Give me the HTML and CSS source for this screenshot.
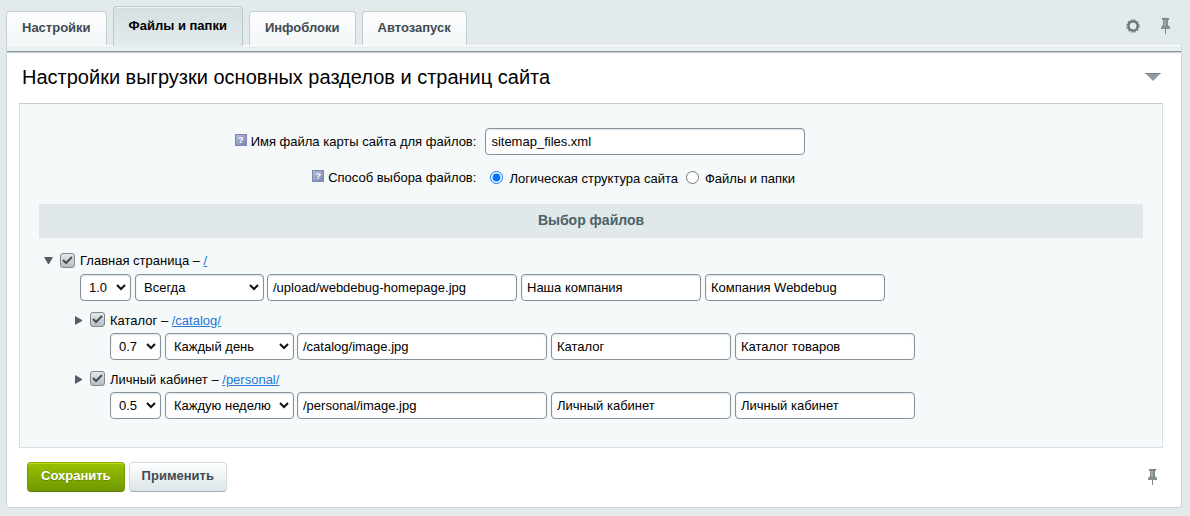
FILE: index.html
```html
<!DOCTYPE html>
<html lang="ru">
<head>
<meta charset="utf-8">
<title>Настройки выгрузки</title>
<link rel="stylesheet" href="styles.css">
</head>
<body>
<svg class="defs" aria-hidden="true">
  <symbol id="pin" viewBox="0 0 12 18"><path d="M3 1h7v2H9v5l2 2v2H2v-2l2-2V3H3z" fill="#858e91"/><path d="M3 1h7v1H3z" fill="#737d80"/><path d="M5 3h2v6H5z" fill="#9da5a8"/><path d="M6 12h1v5H6z" fill="#7d8588"/></symbol>
</svg>
<form class="page">
  <header class="bar">
    <nav class="tabs">
      <button type="button" class="tab">Настройки</button>
      <button type="button" class="tab tab-active">Файлы и папки</button>
      <button type="button" class="tab">Инфоблоки</button>
      <button type="button" class="tab">Автозапуск</button>
    </nav>
    <div class="tools">
      <button type="button" class="icon-button" aria-label="Параметры"><svg class="gear" viewBox="0 0 14 14"><circle cx="7" cy="7" r="4.6" fill="none" stroke="#697275" stroke-width="2.2"/><circle cx="7" cy="7" r="6" fill="none" stroke="#7c8588" stroke-width="1.5" stroke-dasharray="1.9 1.24"/></svg></button>
      <button type="button" class="icon-button" aria-label="Закрепить"><svg class="pin"><use href="#pin"/></svg></button>
    </div>
  </header>
  <main class="panel">
    <div class="title-row">
      <h1 class="title">Настройки выгрузки основных разделов и страниц сайта</h1>
      <button type="button" class="icon-button" aria-label="Свернуть"><svg class="collapse" viewBox="0 0 16 8"><path d="M0 0h16L8 8z" fill="#929b9f"/><path d="M0 0h16l-1 1H1z" fill="#767f83"/></svg></button>
    </div>
    <section class="content">
      <div class="field">
        <div class="field-label"><span class="hint">?</span><label for="file-name">Имя файла карты сайта для файлов:</label></div>
        <input class="control name-input" id="file-name" type="text" value="sitemap_files.xml">
      </div>
      <div class="field">
        <div class="field-label"><span class="hint">?</span><span id="mode-label">Способ выбора файлов:</span></div>
        <div class="radios" role="radiogroup" aria-labelledby="mode-label">
          <input class="radio" type="radio" name="mode" id="mode-logic" checked><label class="radio-label" for="mode-logic">Логическая структура сайта</label>
          <input class="radio" type="radio" name="mode" id="mode-files"><label class="radio-label" for="mode-files">Файлы и папки</label>
        </div>
      </div>
      <h2 class="section">Выбор файлов</h2>
      <ul class="tree">
        <li>
          <div class="node"><button type="button" class="icon-button" aria-label="Свернуть ветвь"><svg class="arrow" viewBox="0 0 10 10"><path d="M0 1h9L5 8H4z" fill="#535c69"/></svg></button><input class="check" type="checkbox" id="n1" checked><span><label for="n1">Главная страница</label> – <a class="link" href="#home">/</a></span></div>
          <div class="controls">
            <select class="control priority" aria-label="Приоритет"><option>1.0</option></select>
            <select class="control frequency" aria-label="Частота"><option>Всегда</option></select>
            <input class="control image" type="text" aria-label="Изображение" value="/upload/webdebug-homepage.jpg">
            <input class="control text" type="text" aria-label="Название" value="Наша компания">
            <input class="control text" type="text" aria-label="Описание" value="Компания Webdebug">
          </div>
          <ul class="tree branch">
            <li>
              <div class="node"><button type="button" class="icon-button" aria-label="Развернуть ветвь"><svg class="arrow" viewBox="0 0 10 10"><path d="M1 0l7 4v1L1 9z" fill="#535c69"/></svg></button><input class="check" type="checkbox" id="n2" checked><span><label for="n2">Каталог</label> – <a class="link" href="#catalog">/catalog/</a></span></div>
              <div class="controls">
                <select class="control priority" aria-label="Приоритет"><option>0.7</option></select>
                <select class="control frequency" aria-label="Частота"><option>Каждый день</option></select>
                <input class="control image" type="text" aria-label="Изображение" value="/catalog/image.jpg">
                <input class="control text" type="text" aria-label="Название" value="Каталог">
                <input class="control text" type="text" aria-label="Описание" value="Каталог товаров">
              </div>
            </li>
            <li>
              <div class="node"><button type="button" class="icon-button" aria-label="Развернуть ветвь"><svg class="arrow" viewBox="0 0 10 10"><path d="M1 0l7 4v1L1 9z" fill="#535c69"/></svg></button><input class="check" type="checkbox" id="n3" checked><span><label for="n3">Личный кабинет</label> – <a class="link" href="#personal">/personal/</a></span></div>
              <div class="controls">
                <select class="control priority" aria-label="Приоритет"><option>0.5</option></select>
                <select class="control frequency" aria-label="Частота"><option>Каждую неделю</option></select>
                <input class="control image" type="text" aria-label="Изображение" value="/personal/image.jpg">
                <input class="control text" type="text" aria-label="Название" value="Личный кабинет">
                <input class="control text" type="text" aria-label="Описание" value="Личный кабинет">
              </div>
            </li>
          </ul>
        </li>
      </ul>
    </section>
    <footer class="footer">
      <div class="actions">
        <button type="submit" class="button button-save">Сохранить</button>
        <button type="button" class="button">Применить</button>
      </div>
      <button type="button" class="icon-button" aria-label="Закрепить панель"><svg class="pin"><use href="#pin"/></svg></button>
    </footer>
  </main>
</form>
</body>
</html>
```

FILE: styles.css
```css
* { box-sizing: border-box; }
body {
  margin: 0;
  background: #e2eaec;
  color: #000;
  font: 13px/18px "Liberation Sans", Arial, sans-serif;
}
button, input, select { font: inherit; margin: 0; }
.defs { position: absolute; width: 0; height: 0; }
.page { padding: 6px 8px 8px 6px; }
.icon-button { display: flex; padding: 0; border: 0; background: none; }

.bar { display: flex; justify-content: space-between; align-items: flex-start; }
.tabs { display: flex; align-items: flex-end; gap: 6px; }
.tab {
  height: 34px;
  padding: 0 15px 2px;
  border: 1px solid #c3ced1;
  border-bottom: 0;
  border-radius: 4px 4px 0 0;
  background: linear-gradient(#fcfdfd, #f3f7f8);
  box-shadow: inset 0 1px #fff;
  color: #3f4b54;
  font-weight: bold;
}
.tab-active {
  height: 40px;
  margin-bottom: -1px;
  background: linear-gradient(#d5dfe2, #e3ebed);
  border-color: #b9c6ca;
  box-shadow: inset 0 1px #eef3f4;
  color: #000;
}
.tools { display: flex; align-items: center; gap: 19px; padding: 11px 11px 0 0; }
.gear { width: 14px; height: 14px; }
.pin { width: 12px; height: 18px; }

.panel {
  border: 1px solid #ccd7db;
  border-top: 0;
  border-radius: 0 0 3px 3px;
  background: #fff;
}
.title-row {
  display: flex;
  justify-content: space-between;
  align-items: center;
  height: 58px;
  padding: 6px 20px 0 15px;
  background: linear-gradient(#fff 1px, #e8eff1 1px, #e8eff1 6px, #8a9497 6px, #8a9497 7px, #c5d0d4 7px, #c5d0d4 8px, #fff 8px);
}
.title { margin: 0; font-size: 20px; line-height: 24px; font-weight: normal; }
.collapse { width: 16px; height: 8px; }

.content {
  margin: 0 18px 0 12px;
  padding: 24px 19px 28px;
  border: 1px solid #d5e0e4;
  border-top-color: #c4ced2;
  background: #f5f9f9;
}
.field { display: grid; grid-template-columns: 2fr 3fr; gap: 8px; align-items: center; min-height: 27px; margin-bottom: 9px; }
.field-label { display: flex; justify-content: flex-end; align-items: center; gap: 4px; padding: 0 1px 0 0; }
.hint {
  width: 12px;
  height: 12px;
  margin-bottom: 4px;
  border: 1px solid #7d86ad;
  background: linear-gradient(135deg, #b0b8da, #7f89b2);
  color: #fff;
  font: bold 9px/10px "Liberation Sans", Arial, sans-serif;
  text-align: center;
}
.control {
  height: 27px;
  padding: 0 5px;
  border: 1px solid #87919c;
  border-radius: 4px;
  background: #fff;
  box-shadow: inset 0 1px 2px #dce2e5;
  color: #000;
}
.name-input { width: 320px; }
.radios { display: flex; align-items: center; padding: 0 0 1px 5px; }
.radio { width: 13px; height: 13px; margin-right: 6px; }
.radio-label { margin-right: 8px; padding-top: 3px; }
.section {
  margin: 13px 0;
  padding: 7px 0 9px;
  background: #e0e8ea;
  color: #4b6267;
  font-size: 14px;
  line-height: 18px;
  text-align: center;
}
.tree { margin: 0; padding: 0; list-style: none; }
.branch { padding-left: 30px; }
.node { display: flex; align-items: center; gap: 5px; height: 20px; padding-left: 5px; }
.branch .node { height: 19px; margin-top: 10px; }
.arrow { width: 10px; height: 10px; }
.check {
  appearance: none;
  width: 15px;
  height: 15px;
  margin-left: 1px;
  border: 1px solid #81898e;
  border-radius: 3px;
  background: url("data:image/svg+xml,%3Csvg xmlns='http://www.w3.org/2000/svg' viewBox='0 0 13 13'%3E%3Cpath d='M2 6l3 3 6-6' fill='none' stroke='%23464d52' stroke-width='2'/%3E%3C/svg%3E"), linear-gradient(#e4e8ea, #b6bdc0);
}
.node .check { margin-bottom: 2px; }
.link { color: #2675d7; }
.controls { display: flex; gap: 4px; margin: 3px 0 0 41px; }
select.control {
  appearance: none;
  padding: 0 16px 0 8px;
  background: #fff url("data:image/svg+xml,%3Csvg xmlns='http://www.w3.org/2000/svg' width='10' height='7'%3E%3Cpath d='M1 1l4 4 4-4' fill='none' stroke='%23111' stroke-width='2'/%3E%3C/svg%3E") no-repeat right 4px center;
}
.priority { width: 51px; }
.frequency { width: 129px; }
.image { width: 250px; margin-left: -1px; }
.text { width: 180px; }

.footer { display: flex; justify-content: space-between; align-items: center; padding: 14px 23px 15px 20px; }
.actions { display: flex; gap: 4px; }
.button {
  height: 30px;
  padding: 0 12px 2px;
  border: 1px solid #d3dcdf;
  border-bottom-color: #a6b1b5;
  border-radius: 4px;
  background: linear-gradient(#fff, #dbe5e8);
  color: #3f4b54;
  font-weight: bold;
}
.button-save {
  padding: 0 13px 2px;
  border-color: #86ac00 #729a00 #5e8000;
  background: linear-gradient(#9ac000, #6e9800);
  box-shadow: inset 0 1px #bddb19;
  color: #fff;
  text-shadow: 0 1px #628700;
}
```
